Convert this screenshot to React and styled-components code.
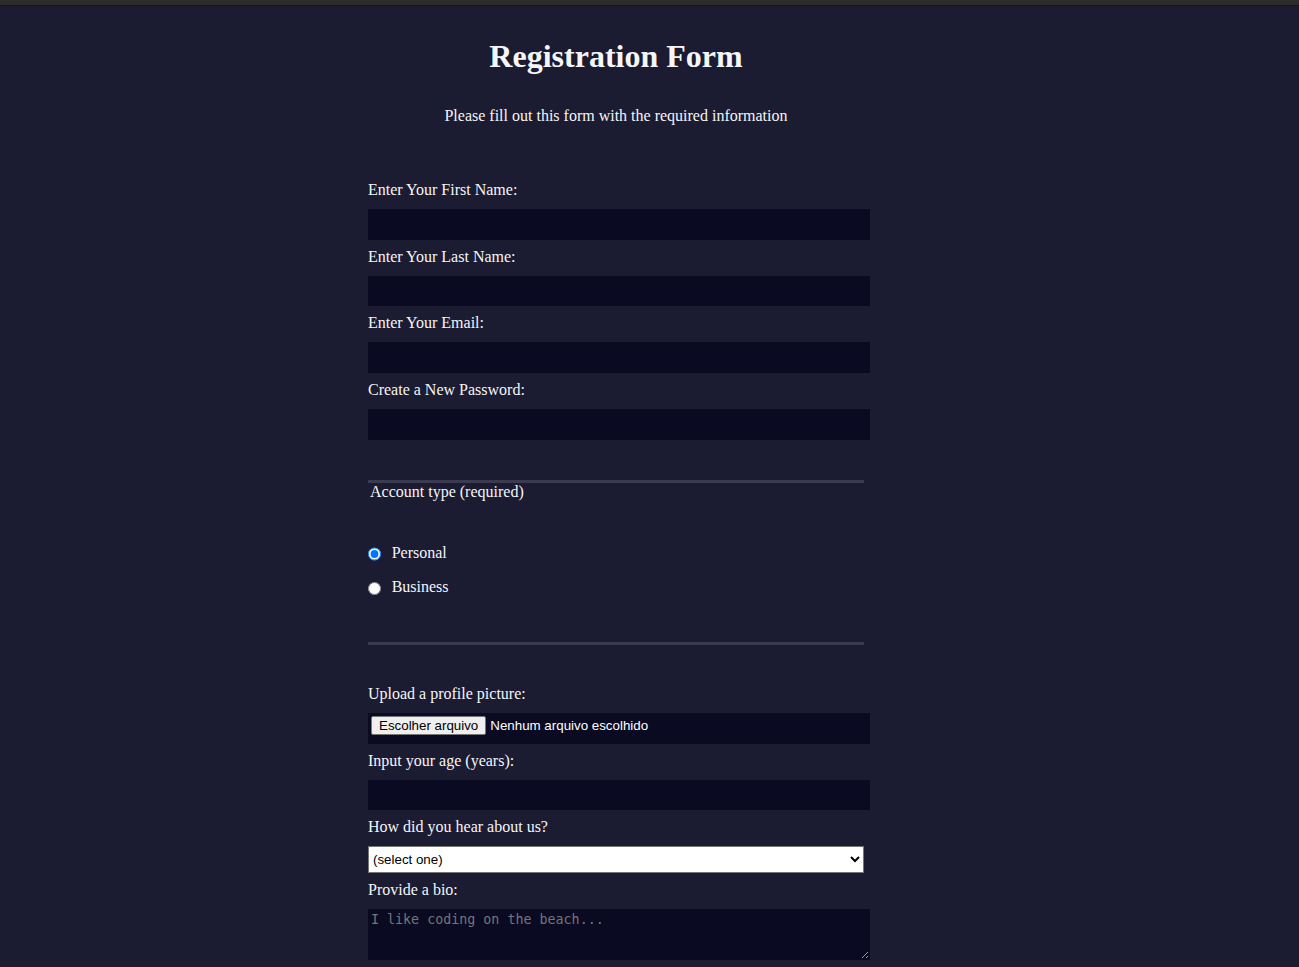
import React from "react";
import styled, { createGlobalStyle } from "styled-components";

const GlobalStyle = createGlobalStyle`
  html, body {
    overflow: hidden;
  }
  body {
    width: 100%;
    height: 100vh;
    margin: 0;
    background-color: #1b1b32;
    color: #f5f6f7;
    font-family: "Liberation Serif", "Times New Roman", serif;
    font-size: 16px;
  }
`;

const TopBar = styled.div`
  height: 5px;
  background: #2c2c2c;
  border-bottom: 1px solid #141414;
`;

const Page = styled.main`
  width: calc(100% - 67px);
`;

const Title = styled.h1`
  margin: 1em auto;
  text-align: center;
  font-size: 2em;
  font-weight: bold;
`;

const Intro = styled.p`
  margin: 1em auto;
  text-align: center;
`;

const Form = styled.form`
  width: 60vw;
  max-width: 500px;
  min-width: 300px;
  margin: 0 auto;
  padding-bottom: 2em;
`;

const Fieldset = styled.fieldset`
  margin: 0 2px;
  border: none;
  padding: 2rem 0;
  min-inline-size: min-content;
  border-bottom: ${(p) => (p.$last ? "none" : "3px solid #3b3b4f")};
`;

const Legend = styled.legend`
  padding: 0 2px;
`;

const Label = styled.label`
  display: block;
  margin: 0.5rem 0;
`;

const controlBase = `
  margin: 10px 0 0 0;
  width: 100%;
  min-height: 2em;
`;

const TextInput = styled.input`
  ${controlBase}
  background-color: #0a0a23;
  border: 1px solid #0a0a23;
  color: #ffffff;
  padding: 1px 2px;
  font-family: "Liberation Sans", Arial, sans-serif;
  font-size: 13.333px;
`;

const Radio = styled.input`
  min-height: 2em;
  font-size: 13.333px;
  width: unset;
  margin: 0 0.5em 0 0;
  vertical-align: middle;
  background-color: #0a0a23;
  border: 1px solid #0a0a23;
`;

const FileBox = styled.span`
  display: inline-flex;
  align-items: baseline;
  box-sizing: content-box;
  width: 100%;
  min-height: 2em;
  margin: 10px 0 0 0;
  padding: 2px 2px 0 2px;
  border: 1px solid #0a0a23;
  background-color: #0a0a23;
  color: #ffffff;
  font-family: "Liberation Sans", Arial, sans-serif;
  font-size: 13.333px;
`;

const FileButton = styled.button`
  margin: 0 4px 0 0;
  padding: 1px 7px;
  border: 1px solid #767676;
  border-radius: 2px;
  background: #efefef;
  color: #000000;
  font-family: "Liberation Sans", Arial, sans-serif;
  font-size: 13.333px;
  line-height: normal;
`;

const FileName = styled.span`
  white-space: nowrap;
`;

const Select = styled.select`
  ${controlBase}
  font-family: "Liberation Sans", Arial, sans-serif;
  font-size: 13.333px;
  background: #ffffff;
  color: #000000;
  border: 1px solid #767676;
`;

const Bio = styled.textarea`
  ${controlBase}
  background-color: #0a0a23;
  border: 1px solid #0a0a23;
  color: #ffffff;
  padding: 2px;
  font-family: "DejaVu Sans Mono", monospace;
  font-size: 13.333px;
`;

export default function App() {
  return (
    <>
      <GlobalStyle />
      <TopBar />
      <Page>
        <Title>Registration Form</Title>
        <Intro>Please fill out this form with the required information</Intro>
        <Form onSubmit={(e) => e.preventDefault()}>
          <Fieldset>
            <Label>
              Enter Your First Name: <TextInput type="text" name="first-name" />
            </Label>
            <Label>
              Enter Your Last Name: <TextInput type="text" name="last-name" />
            </Label>
            <Label>
              Enter Your Email: <TextInput type="email" name="email" />
            </Label>
            <Label>
              Create a New Password: <TextInput type="password" name="password" />
            </Label>
          </Fieldset>
          <Fieldset>
            <Legend>Account type (required)</Legend>
            <Label>
              <Radio type="radio" name="account-type" defaultChecked /> Personal
            </Label>
            <Label>
              <Radio type="radio" name="account-type" /> Business
            </Label>
          </Fieldset>
          <Fieldset $last>
            <Label>
              Upload a profile picture:{" "}
              <FileBox>
                <FileButton type="button">Escolher arquivo</FileButton>
                <FileName>Nenhum arquivo escolhido</FileName>
              </FileBox>
            </Label>
            <Label>
              Input your age (years): <TextInput type="number" name="age" min="13" max="120" />
            </Label>
            <Label>
              How did you hear about us?{" "}
              <Select name="referrer" defaultValue="">
                <option value="">(select one)</option>
                <option value="1">freeCodeCamp News</option>
                <option value="2">freeCodeCamp YouTube Channel</option>
                <option value="3">freeCodeCamp Forum</option>
                <option value="4">Other</option>
              </Select>
            </Label>
            <Label>
              Provide a bio:{" "}
              <Bio name="bio" rows={3} cols={30} placeholder="I like coding on the beach..." />
            </Label>
          </Fieldset>
        </Form>
      </Page>
    </>
  );
}
